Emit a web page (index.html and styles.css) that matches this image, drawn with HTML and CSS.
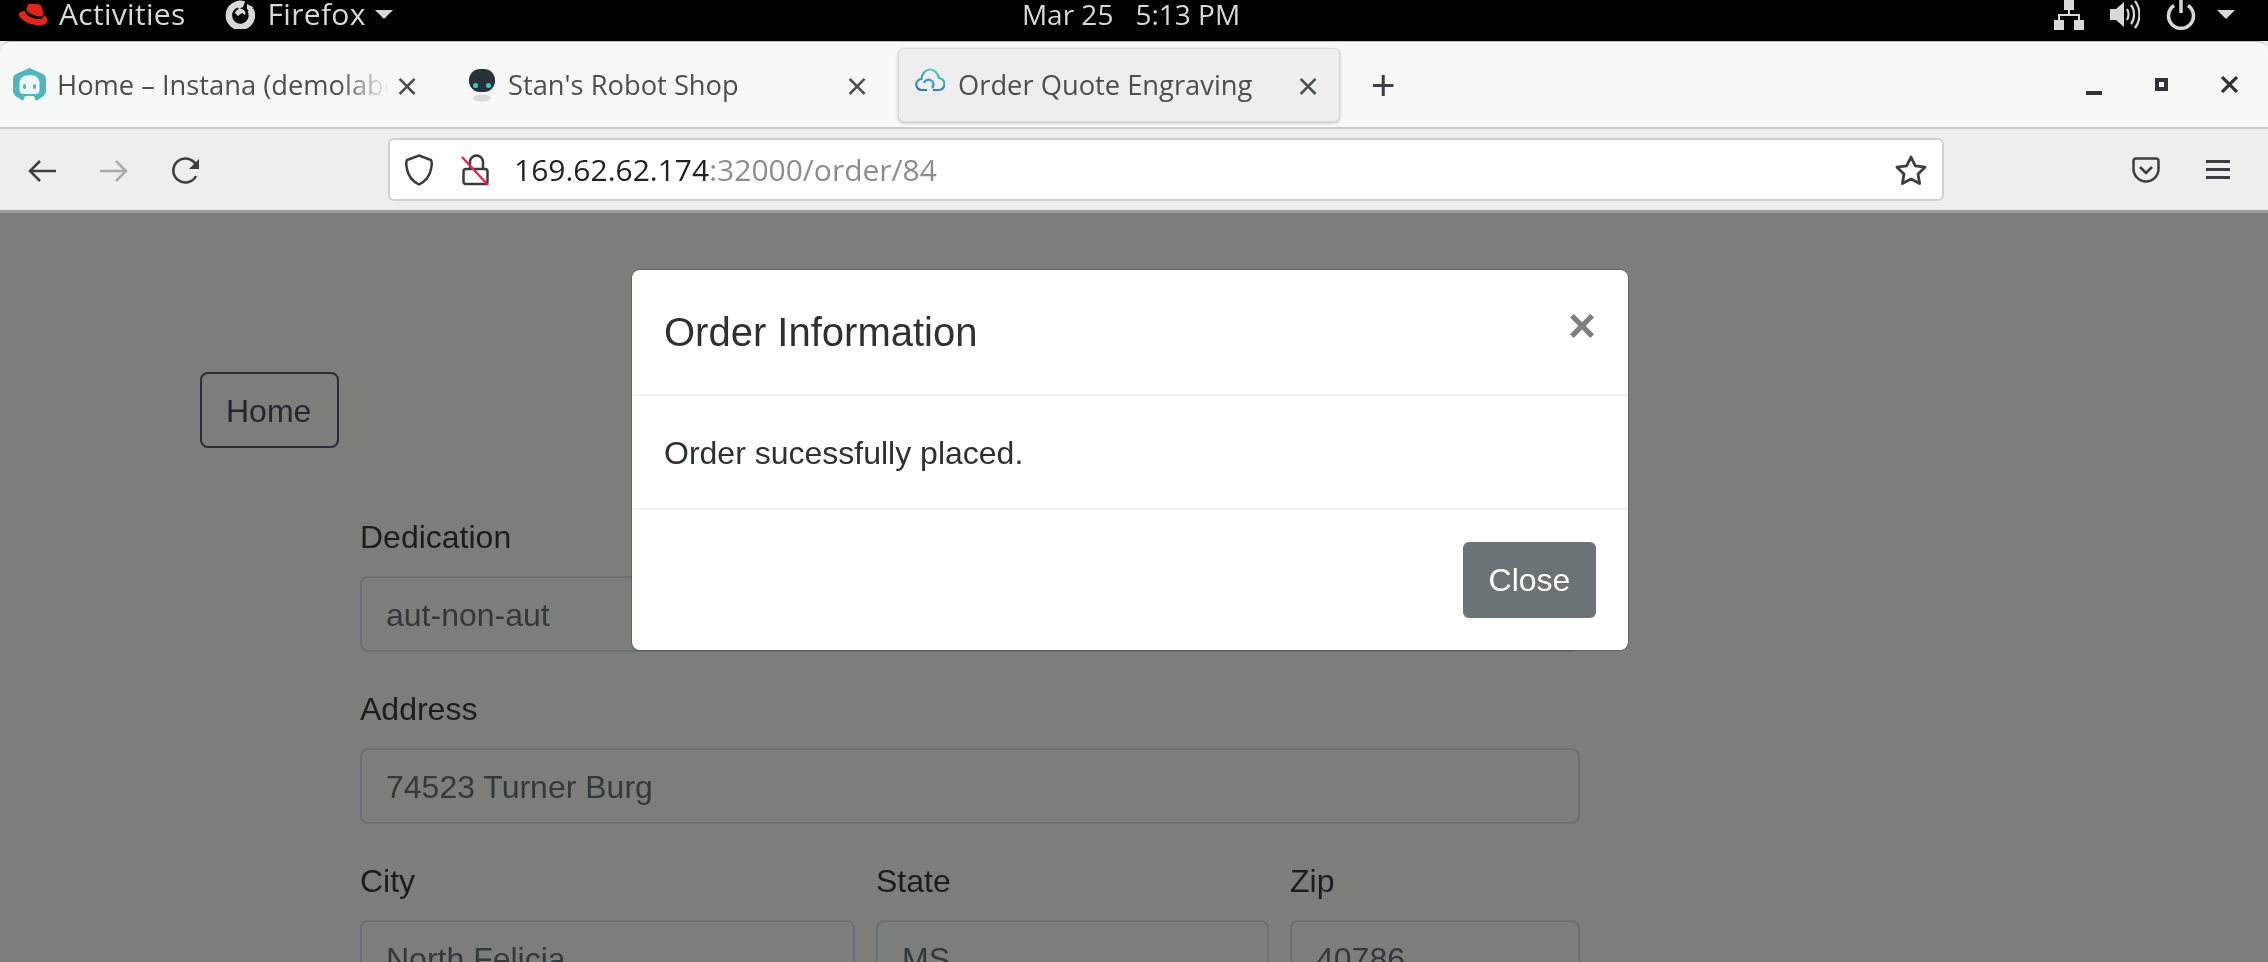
FILE: index.html
```html
<!DOCTYPE html>
<html lang="en">
<head>
<meta charset="utf-8">
<title>Order Quote Engraving</title>
<link rel="stylesheet" href="styles.css">
</head>
<body>
<div class="screen">
  <header class="topbar">
    <div class="top-left">
      <svg class="i-redhat" viewBox="0 0 30 22"><path fill="#e1251b" d="M20.500 12.500c2.200 0 4.800-.4 4.800-2.500 0-.3 0-.5-.1-.7L23.700 3C23.400 1.900 23 1.400 21 .5 19.500-.3 16.800-1 16-1c-.8 0-1 1-2 1s-1.500-.7-2.400-.7c-.9 0-1.400.6-1.800 1.800L8.200 5.500C8.100 7.500 13.500 11 20.500 12.500Z"/><path fill="#e1251b" d="M25.300 10.900c.2.800.2 1 .2 1.200 0 1.900-2.100 3-4.900 3C14 15 7.300 10.800 7.300 8c0-.4.100-.8.300-1.100C4.500 7 .8 7.700.8 10.500c0 4.800 11.200 10.700 20.200 10.700 6.800 0 8.600-3 8.600-5.500 0-1.900-1.600-4-4.300-4.800Z"/></svg>
      <span class="shell-text activities">Activities</span>
      <svg class="i-firefox" viewBox="0 0 30 30"><path fill="none" stroke="#d8d8d6" stroke-width="6.500" d="M19 5.500A11.500 11.500 0 1 0 25.500 11"/><path fill="#d8d8d6" d="M14 0c1 3 3 4 5 5l-4 5-3-1c2-2 3-5 2-9ZM22 5l6 3-2 6-4-4Z"/><path fill="#d8d8d6" d="M10 14c1-3 4-5 7-4 3 1 4 4 3 6l-3-2-4 3Z"/></svg>
      <span class="shell-text firefox">Firefox</span>
      <span class="caret"></span>
    </div>
    <div class="shell-text clock"><span>Mar 25</span><span>5:13 PM</span></div>
    <div class="top-right">
      <svg class="i-status" viewBox="0 0 30 30"><g fill="#d8d8d6"><rect x="10" y="0" width="10" height="10"/><rect x="0" y="20" width="10" height="10"/><rect x="20" y="20" width="10" height="10"/></g><path fill="none" stroke="#d8d8d6" stroke-width="2" d="M15 10v5M5 20v-5h20v5"/></svg>
      <svg class="i-status" viewBox="0 0 30 30"><path fill="#d8d8d6" d="M0 9h6l8-7v25l-8-7H0Z"/><path fill="none" stroke="#d8d8d6" stroke-width="2.200" d="M17 9c2 3 2 8 0 11M21 5c4 5 4 14 0 19M25 1c6 8 6 19 0 27"/></svg>
      <svg class="i-status" viewBox="0 0 30 30"><path fill="none" stroke="#d8d8d6" stroke-width="3.500" d="M15 0v13M8 5.500a12.500 12.500 0 1 0 14 0"/></svg>
      <span class="caret"></span>
    </div>
  </header>

  <div class="window">
    <div class="tabbar">
      <div class="tab">
        <svg class="fav-instana" viewBox="0 0 33 34"><path fill="#4fb6c0" d="M16.500 0 30 6c2 1 3 3 3 5v12c0 3-2 5-4 6l-6 4-2-5H12l-2 5-6-4c-2-1-4-3-4-6V11c0-2 1-4 3-5Z"/><path fill="#eef8f8" d="M16.500 7c-6 0-10 3-10 8v7c0 2 1 4 4 4h12c3 0 4-2 4-4v-7c0-5-4-8-10-8Z"/><rect x="10" y="16" width="3" height="5" rx="1.500" fill="#4fb6c0"/><rect x="20" y="16" width="3" height="5" rx="1.500" fill="#4fb6c0"/></svg>
        <span class="tab-title fade">Home – Instana (demolabc</span>
        <span class="tab-x">×</span>
      </div>
      <div class="tab">
        <svg class="fav-robot" viewBox="0 0 28 34"><ellipse cx="14" cy="30" rx="9" ry="3.500" fill="#d5dada"/><rect x="1" y="1" width="26" height="23" rx="11" fill="#2a3138"/><rect x="5" y="15" width="5" height="5" rx="2.500" fill="#2ecfd0"/><rect x="18" y="15" width="5" height="5" rx="2.500" fill="#2ecfd0"/></svg>
        <span class="tab-title">Stan's Robot Shop</span>
        <span class="tab-x">×</span>
      </div>
      <div class="tab tab-active">
        <svg class="fav-cloud" viewBox="0 0 30 24"><defs><linearGradient id="cg" x1=".6" x2=".3" y1="0" y2="1"><stop offset="0" stop-color="#55c9b8"/><stop offset="1" stop-color="#2f74c0"/></linearGradient></defs><path fill="none" stroke="url(#cg)" stroke-width="2.200" d="M12 22H7a5.500 5.500 0 0 1-.5-11C7 5 11 1.500 15 1.500S23 5 24 10a6 6 0 0 1-1 12h-5M9 15a5 5 0 0 1 8-2c2 2 2 5 0 7"/></svg>
        <span class="tab-title">Order Quote Engraving</span>
        <span class="tab-x">×</span>
      </div>
      <span class="new-tab">+</span>
      <div class="win-buttons">
        <span class="win-min"></span>
        <span class="win-max"></span>
        <svg class="win-close" viewBox="0 0 17 17"><path stroke="#2e3436" stroke-width="3.200" d="M1 1l15 15M16 1 1 16"/></svg>
      </div>
    </div>

    <div class="toolbar">
      <svg class="tool i-back" viewBox="0 0 30 30"><path fill="none" stroke="#3b3f42" stroke-width="2.500" d="M29 15H3M13 5 3 15l10 10"/></svg>
      <svg class="tool i-forward" viewBox="0 0 30 30"><path fill="none" stroke="#a9abab" stroke-width="2.500" d="M1 15h26M17 5l10 10-10 10"/></svg>
      <svg class="tool i-reload" viewBox="0 0 30 30"><path fill="none" stroke="#3b3f42" stroke-width="2.500" d="M25 20a12 12 0 1 1 0-11"/><path fill="#3b3f42" d="M28 3v10H18Z"/></svg>
      <div class="urlbar">
        <svg class="i-shield" viewBox="0 0 30 32"><path fill="none" stroke="#3a3d40" stroke-width="2.500" d="M15 1.500 27 6c1 2 1 5 0 9-1 6-5 12-12 15.500C8 27 4 21 3 15 2 11 2 8 3 6Z"/></svg>
        <svg class="i-lock" viewBox="0 0 28 32"><path fill="none" stroke="#3a3d40" stroke-width="2.500" d="M5 15h19c1.500 0 2.500 1 2.500 2.500v10c0 1.500-1 2.500-2.500 2.500H5c-1.500 0-2.500-1-2.500-2.500v-10C2.500 16 3.500 15 5 15ZM9 15V8a6.500 6.500 0 0 1 13 0v7"/><path stroke="#e22850" stroke-width="2.500" d="M1 3l26 28"/></svg>
        <span class="url"><span class="url-host">169.62.62.174</span><span class="url-rest">:32000/order/84</span></span>
        <svg class="i-star" viewBox="0 0 32 30"><path fill="none" stroke="#3b3f42" stroke-width="2.800" stroke-linejoin="round" d="M16 2l4.300 8.800 9.700 1.400-7 6.800 1.600 9.600L16 24.100 7.400 28.600 9 19l-7-6.800 9.700-1.400Z"/></svg>
      </div>
      <svg class="i-pocket" viewBox="0 0 28 26"><path fill="none" stroke="#3b3f42" stroke-width="2.500" d="M4 1.500h20c1.500 0 2.500 1 2.500 2.500v8c0 7-6 12.500-12.500 12.500S1.500 19 1.500 12V4c0-1.500 1-2.500 2.500-2.500Z"/><path fill="none" stroke="#3b3f42" stroke-width="2.500" d="M8 10l6 6 6-6"/></svg>
      <div class="hamburger"><span></span><span></span><span></span></div>
    </div>
  </div>

  <main class="page">
    <a class="btn-home">Home</a>
    <form class="order-form">
      <div class="field">
        <label class="field-label">Dedication</label>
        <div class="field-input">aut-non-aut</div>
      </div>
      <div class="field">
        <label class="field-label">Address</label>
        <div class="field-input">74523 Turner Burg</div>
      </div>
      <div class="field-row">
        <div class="field">
          <label class="field-label">City</label>
          <div class="field-input">North Felicia</div>
        </div>
        <div class="field">
          <label class="field-label">State</label>
          <div class="field-input">MS</div>
        </div>
        <div class="field">
          <label class="field-label">Zip</label>
          <div class="field-input">40786</div>
        </div>
      </div>
    </form>

    <section class="modal">
      <div class="modal-header">
        <h5 class="modal-title">Order Information</h5>
        <span class="modal-x">×</span>
      </div>
      <div class="modal-body">Order sucessfully placed.</div>
      <div class="modal-footer"><button class="btn-close" type="button">Close</button></div>
    </section>
  </main>
</div>
</body>
</html>
```
FILE: styles.css
```css
* { box-sizing: border-box; }
html, body { margin: 0; padding: 0; height: 100%; overflow: hidden; background: #000; }
.screen {
  width: 2268px;
  height: 962px;
  display: flex;
  flex-direction: column;
  overflow: hidden;
  filter: blur(0.7px);
  font-family: "Liberation Sans", Arial, sans-serif;
}

/* GNOME top bar */
.topbar {
  height: 41px;
  flex: none;
  background: #000;
  display: grid;
  grid-template-columns: 1fr auto 1fr;
  align-items: start;
  color: #d8d8d6;
}
.shell-text { font-family: "Open Sans", sans-serif; font-size: 28px; line-height: 28px; color: #d8d8d6; }
.top-left { display: flex; align-items: flex-start; padding-left: 18px; }
.top-left .shell-text { font-size: 30px; letter-spacing: .3px; }
.i-redhat { width: 30px; height: 22px; margin-top: 4px; }
.activities { margin-left: 11px; }
.i-firefox { width: 30px; height: 30px; margin-left: 39px; margin-top: -1px; }
.firefox { margin-left: 13px; }
.caret {
  width: 0; height: 0; margin-top: 10px; margin-left: 9px;
  border-left: 9px solid transparent;
  border-right: 9px solid transparent;
  border-top: 9px solid #d8d8d6;
}
.clock { display: flex; gap: 22px; margin-right: 6px; }
.top-right { display: flex; justify-content: flex-end; align-items: flex-start; gap: 26px; padding-right: 33px; }
.i-status { width: 30px; height: 30px; }
.top-right .caret { margin-left: -5px; }

/* Browser chrome */
.window { flex: none; background: #eee; }
.tabbar {
  height: 88px;
  display: flex;
  align-items: center;
  background: #f7f9f6;
  border-top: 1px solid #bdbdbb;
  border-bottom: 2px solid #c9c9c7;
  border-radius: 10px 10px 0 0;
  font-family: "Open Sans", sans-serif;
  color: #4a4f50;
}
.tab {
  width: 450px;
  height: 74px;
  display: flex;
  align-items: center;
  padding-left: 13px;
  border-radius: 6px;
  flex: none;
}
.tab-title { font-size: 27.3px; line-height: 36px; margin-top: 1px; white-space: nowrap; overflow: hidden; flex: 1; min-width: 0; }
.fade {
  -webkit-mask-image: linear-gradient(to right, #000 84%, transparent 99%);
  mask-image: linear-gradient(to right, #000 84%, transparent 99%);
}
.tab-x { font-size: 38px; line-height: 36px; width: 30px; text-align: center; margin: 0 28px 0 0; color: #4a4f50; flex: none; }
.tab-active .tab-x { margin-right: 16px; }
.fav-instana { width: 33px; height: 34px; margin-right: 11px; flex: none; }
.fav-robot { width: 28px; height: 34px; margin: 0 12px 0 5px; flex: none; }
.fav-cloud { width: 30px; height: 24px; margin: -10px 13px 0 3px; flex: none; }
.tab-active {
  width: 442px;
  margin-left: -2px;
  background: #eee;
  border: 1px solid #d9d9d7;
  box-shadow: 0 1px 3px rgba(0, 0, 0, .25);
}
.new-tab { font-family: "Liberation Sans", sans-serif; font-size: 42px; line-height: 42px; margin: 3px 0 0 31px; color: #3b3f42; }
.win-buttons { margin-left: auto; display: flex; align-items: center; padding-right: 30px; }
.win-min { width: 16px; height: 4px; background: #2e3436; margin-top: 16px; }
.win-max { width: 13px; height: 13px; border: 4px solid #2e3436; margin: 0 53px; }
.win-close { width: 17px; height: 17px; }
.toolbar {
  height: 84px;
  display: flex;
  align-items: center;
  background: #eee;
  border-bottom: 3px solid #9a9b99;
}
.tool { width: 30px; height: 30px; flex: none; margin-top: 2px; }
.i-back { margin-left: 27px; }
.i-forward { margin-left: 42px; }
.i-reload { margin-left: 42px; }
.urlbar {
  width: 1556px;
  height: 63px;
  margin-left: 187px;
  display: flex;
  align-items: center;
  background: #fff;
  border: 2px solid #cfcfcd;
  border-radius: 6px;
  padding: 0 15px 0 14px;
  flex: none;
}
.i-shield { width: 30px; height: 32px; flex: none; }
.i-lock { width: 28px; height: 32px; margin-left: 27px; flex: none; }
.url { flex: 1; margin-left: 25px; font-family: "Open Sans", sans-serif; font-size: 30px; line-height: 36px; }
.url-host { color: #202325; }
.url-rest { color: #8c8e8e; }
.i-star { width: 32px; height: 30px; flex: none; }
.i-pocket { width: 28px; height: 26px; margin-left: 188px; flex: none; }
.hamburger { width: 24px; margin-left: 46px; display: flex; flex-direction: column; gap: 5px; flex: none; }
.hamburger span { height: 3px; background: #3b3f42; }

/* Page, dimmed behind the dialog */
.page {
  position: relative;
  flex: 1;
  min-height: 0;
  overflow: hidden;
  background: #7c7e7b;
  padding: 159px 0 0 200px;
  font-size: 32px;
  line-height: 48px;
}
.btn-home {
  display: inline-block;
  padding: 13px 26px 11px 24px;
  border: 2px solid #2a2e31;
  border-radius: 8px;
  color: #24282b;
}
.order-form { width: 1220px; margin: 64px 0 0 160px; }
.field { margin-bottom: 32px; }
.field-label { display: block; padding-top: 1px; margin-bottom: 15px; color: #1a1c1e; }
.field-input {
  height: 76px;
  padding: 13px 24px 11px;
  border: 2px solid #6a7173;
  border-radius: 8px;
  color: #33383b;
}
.field-row { display: grid; grid-template-columns: 495px 393px 290px; column-gap: 21px; }

/* Dialog */
.modal {
  position: absolute;
  left: 632px;
  top: 57px;
  width: 996px;
  height: 380px;
  background: #fff;
  border-radius: 8px;
  box-shadow: 0 0 0 1px rgba(0, 0, 0, .2);
  color: #2d3134;
}
.modal-header {
  height: 126px;
  padding: 32px;
  display: flex;
  justify-content: space-between;
  border-bottom: 2px solid #f1f2f3;
}
.modal-title { margin: 0; font-size: 40px; line-height: 60px; font-weight: 400; }
.modal-x { font-size: 48px; line-height: 48px; font-weight: 700; color: #7f7f7f; }
.modal-body { height: 114px; padding: 33px 32px 31px; border-bottom: 2px solid #f1f2f3; }
.modal-footer { padding: 32px; display: flex; justify-content: flex-end; }
.btn-close {
  font: inherit;
  width: 133px;
  height: 76px;
  padding: 12px 0;
  background: #6b7376;
  color: #fff;
  border: 0;
  border-radius: 6px;
}
```
